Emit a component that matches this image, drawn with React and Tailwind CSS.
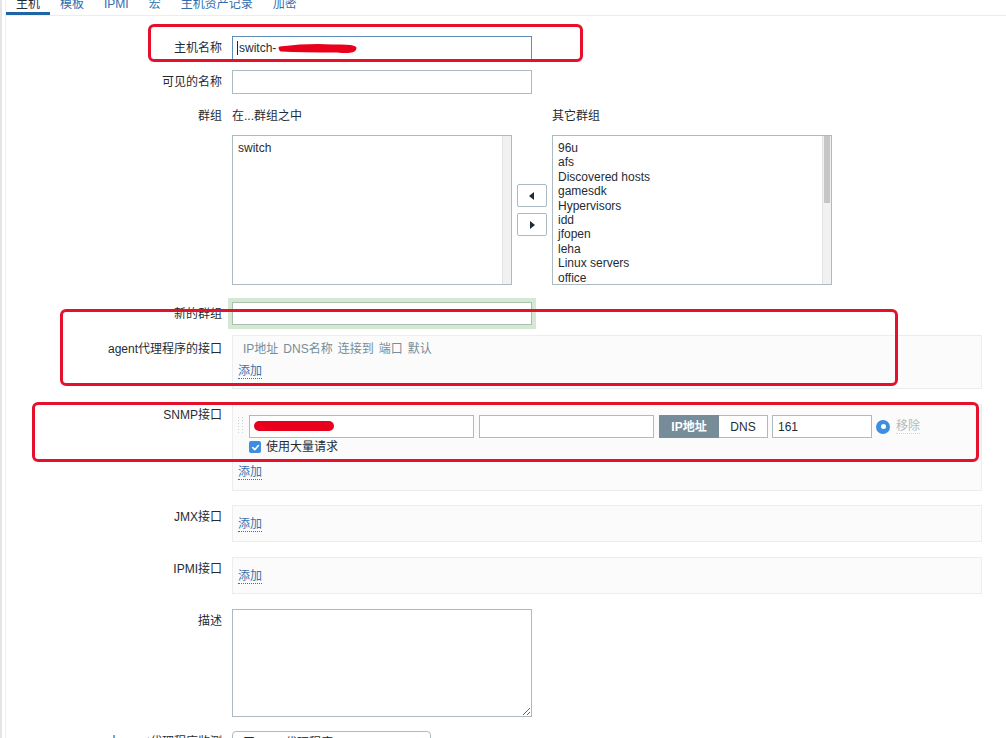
import React from "react";

const Label = ({ children, className = "" }) => (
  <div className={"w-[216px] shrink-0 text-right leading-[16px] " + className}>{children}</div>
);

const AddLink = () => (
  <span className="text-[#3a72ae] border-b border-dotted border-[#3a72ae] leading-[14px]">添加</span>
);

function Check() {
  return (
    <span className="w-[12px] h-[12px] rounded-[2px] bg-[#3d8de0] flex items-center justify-center">
      <svg width="9" height="9" viewBox="0 0 10 10">
        <path d="M2 5.2 L4.2 7.4 L8.2 2.8" fill="none" stroke="white" strokeWidth="1.8" strokeLinecap="round" strokeLinejoin="round" />
      </svg>
    </span>
  );
}

export default function App() {
  const others = ["96u", "afs", "Discovered hosts", "gamesdk", "Hypervisors", "idd", "jfopen", "leha", "Linux servers", "office"];
  return (
    <div className="relative w-[1006px] h-[738px] overflow-hidden bg-white text-[12px] text-[#1f2c33] font-['Liberation_Sans','Noto_Sans_CJK_SC',sans-serif] flex">
      <div className="w-[2px] shrink-0 bg-[#e4e4e4]" />
      <div className="w-[3px] shrink-0" />
      <div className="flex-1 border-l border-[#eef0f1] flex flex-col">
        {/* tabs */}
        <div className="flex h-[16px] border-b border-[#ebeef0] items-start">
          {["主机", "模板", "IPMI", "宏", "主机资产记录", "加密"].map((t, i) => (
            <div
              key={t}
              className={
                "px-[10px] leading-[12px] -mt-[2px] " +
                (i === 0 ? "border-b-[3px] border-[#1f65a6] text-[#1f2c33] h-[17px]" : "text-[#2f6eb0] h-[14px]")
              }
            >
              {t}
            </div>
          ))}
        </div>

        {/* 主机名称 */}
        <div className="flex mt-[20px]">
          <Label className="pt-[4px]">主机名称</Label>
          <div className="ml-[10px] relative w-[300px] h-[24px] border border-[#5e8db5] bg-white flex items-center pl-[4px]">
            <span className="w-[1px] h-[14px] bg-[#1f2c33] mr-[1px]" />
            <span>switch-</span>
            <svg className="absolute left-[44px] top-[5px]" width="82" height="14" viewBox="0 0 82 14">
              <path d="M3 6 C20 4 40 3 55 4 C65 4 74 3 78 6 C78 10 70 10 60 9 C45 9 25 9 4 8 Z" fill="#e8001c" stroke="#e8001c" strokeWidth="3" strokeLinejoin="round" />
            </svg>
          </div>
        </div>

        {/* 可见的名称 */}
        <div className="flex mt-[10px]">
          <Label className="pt-[4px]">可见的名称</Label>
          <div className="ml-[10px] w-[300px] h-[24px] border border-[#acbbc2] bg-white" />
        </div>

        {/* 群组 */}
        <div className="flex mt-[14px]">
          <Label>群组</Label>
          <div className="ml-[10px] flex flex-col">
            <div className="flex leading-[16px]">
              <div className="w-[320px]">在...群组之中</div>
              <div>其它群组</div>
            </div>
            <div className="flex mt-[11px] items-center">
              <div className="w-[280px] h-[150px] border border-[#acbbc2] bg-white flex">
                <div className="flex-1 pl-[5px] pt-[5px] leading-[14.4px]">switch</div>
                <div className="w-[9px] bg-[#f1f1f1] border-l border-[#e3e3e3]" />
              </div>
              <div className="w-[40px] flex flex-col items-center gap-[6px]">
                <div className="w-[30px] h-[23px] border border-[#acbbc2] rounded-[2px] bg-white flex items-center justify-center">
                  <svg width="6" height="8" viewBox="0 0 6 8"><path d="M5 0 L0 4 L5 8 Z" fill="#1f2c33" /></svg>
                </div>
                <div className="w-[30px] h-[23px] border border-[#acbbc2] rounded-[2px] bg-white flex items-center justify-center">
                  <svg width="6" height="8" viewBox="0 0 6 8"><path d="M1 0 L6 4 L1 8 Z" fill="#1f2c33" /></svg>
                </div>
              </div>
              <div className="w-[280px] h-[150px] border border-[#acbbc2] bg-white flex overflow-hidden">
                <div className="flex-1 pl-[5px] pt-[5px] leading-[14.4px]">
                  {others.map((o) => (
                    <div key={o}>{o}</div>
                  ))}
                </div>
                <div className="w-[9px] bg-[#f1f1f1] border-l border-[#e3e3e3] flex flex-col">
                  <div className="h-[67px] bg-[#c6c6c6] mx-[1px]" />
                </div>
              </div>
            </div>
          </div>
        </div>

        {/* 新的群组 */}
        <div className="flex mt-[17px]">
          <Label className="pt-[4px]">新的群组</Label>
          <div className="ml-[10px] w-[300px] h-[23px] border border-[#a9bfb0] bg-white shadow-[0_0_0_4px_#d4e8d4]" />
        </div>

        {/* agent */}
        <div className="flex mt-[10px]">
          <Label className="pt-[6px]">agent代理程序的接口</Label>
          <div className="ml-[10px] w-[750px] h-[54px] border border-[#ebeef0] bg-[#fbfbfb] pl-[5px] pt-[5px]">
            <div className="flex gap-[5px] pl-[5px] text-[#768d99] leading-[16px]">
              <span>IP地址</span>
              <span>DNS名称</span>
              <span>连接到</span>
              <span>端口</span>
              <span>默认</span>
            </div>
            <div className="mt-[6px] leading-[16px]"><AddLink /></div>
          </div>
        </div>

        {/* SNMP */}
        <div className="flex mt-[15px]">
          <Label className="pt-[3px]">SNMP接口</Label>
          <div className="ml-[10px] w-[750px] h-[87px] border border-[#ebeef0] bg-[#fbfbfb] pl-[5px] pt-[10px]">
            <div className="flex items-center">
              <div className="w-[6px] h-[20px] mr-[5px] grid grid-cols-2 gap-[2px] content-start">
                {Array.from({ length: 12 }).map((_, i) => (
                  <span key={i} className="w-[1px] h-[1px] bg-[#c9d3d8]" />
                ))}
              </div>
              <div className="relative w-[225px] h-[23px] border border-[#acbbc2] bg-white">
                <div className="absolute left-[4px] top-[5px] w-[80px] h-[10px] rounded-full bg-[#e8001c]" />
              </div>
              <div className="ml-[5px] w-[175px] h-[23px] border border-[#acbbc2] bg-white" />
              <div className="ml-[5px] flex h-[23px]">
                <div className="w-[60px] bg-[#768d99] border border-[#768d99] text-white font-bold flex items-center justify-center">IP地址</div>
                <div className="w-[49px] bg-white border border-[#acbbc2] border-l-0 flex items-center justify-center">DNS</div>
              </div>
              <div className="ml-[4px] w-[100px] h-[23px] border border-[#acbbc2] bg-white pl-[5px] flex items-center">161</div>
              <div className="ml-[4px] w-[14px] h-[14px] rounded-full bg-[#3d8de0] flex items-center justify-center">
                <span className="w-[5px] h-[5px] rounded-full bg-white" />
              </div>
              <span className="ml-[6px] text-[#acbbc2] border-b border-dotted border-[#d0d8dc] leading-[14px]">移除</span>
            </div>
            <div className="flex items-center gap-[5px] pl-[11px] mt-[1px] leading-[16px]">
              <Check />
              <span>使用大量请求</span>
            </div>
            <div className="mt-[9px] leading-[16px]"><AddLink /></div>
          </div>
        </div>

        {/* JMX */}
        <div className="flex mt-[14px]">
          <Label className="pt-[4px]">JMX接口</Label>
          <div className="ml-[10px] w-[750px] h-[37px] border border-[#ebeef0] bg-[#fbfbfb] pl-[5px] pt-[10px] leading-[16px]">
            <AddLink />
          </div>
        </div>

        {/* IPMI */}
        <div className="flex mt-[15px]">
          <Label className="pt-[4px]">IPMI接口</Label>
          <div className="ml-[10px] w-[750px] h-[37px] border border-[#ebeef0] bg-[#fbfbfb] pl-[5px] pt-[10px] leading-[16px]">
            <AddLink />
          </div>
        </div>

        {/* 描述 */}
        <div className="flex mt-[15px]">
          <Label className="pt-[4px]">描述</Label>
          <textarea className="ml-[10px] w-[300px] h-[108px] border border-[#acbbc2] bg-white outline-none resize" readOnly />
        </div>

        {/* 由agent代理程序监测 */}
        <div className="flex mt-[14px]">
          <Label className="pt-[3px]">由agent代理程序监测</Label>
          <div className="ml-[10px] w-[199px] h-[24px] border border-[#acbbc2] rounded-[4px] bg-white pl-[6px] pt-[3px] leading-[16px]">(无agent代理程序)</div>
        </div>
      </div>

      {/* annotation boxes */}
      <div className="absolute left-[148px] top-[24px] w-[435px] h-[38px] border-[3px] border-[#e5102b] rounded-[6px] pointer-events-none" />
      <div className="absolute left-[60px] top-[309px] w-[838px] h-[77px] border-[3px] border-[#e5102b] rounded-[6px] pointer-events-none" />
      <div className="absolute left-[32px] top-[402px] w-[947px] h-[60px] border-[3px] border-[#e5102b] rounded-[6px] pointer-events-none" />
    </div>
  );
}
